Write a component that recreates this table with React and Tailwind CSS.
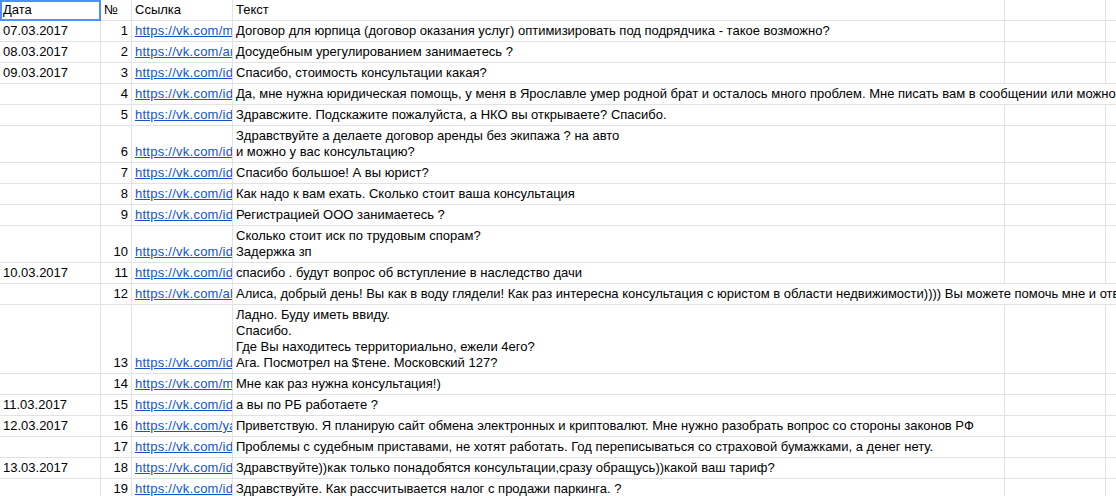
import React from 'react';

const rows = [
  { date: '07.03.2017', n: 1, link: 'https://vk.com/mirpravo', text: ['Договор для юрпица (договор оказания услуг) оптимизировать под подрядчика - такое возможно?'] },
  { date: '08.03.2017', n: 2, link: 'https://vk.com/arteman', text: ['Досудебным урегулированием занимаетесь ?'] },
  { date: '09.03.2017', n: 3, link: 'https://vk.com/id2203841', text: ['Спасибо, стоимость консультации какая?'] },
  { date: '', n: 4, link: 'https://vk.com/id1189223', text: ['Да, мне нужна юридическая помощь, у меня в Ярославле умер родной брат и осталось много проблем. Мне писать вам в сообщении или можно позвонить?'], wide: true },
  { date: '', n: 5, link: 'https://vk.com/id3320914', text: ['Здравсжите. Подскажите пожалуйста, а НКО вы открываете? Спасибо.'] },
  { date: '', n: 6, link: 'https://vk.com/id4410293', text: ['Здравствуйте а делаете договор аренды без экипажа ? на авто', 'и можно у вас консультацию?'] },
  { date: '', n: 7, link: 'https://vk.com/id5581022', text: ['Спасибо большое! А вы юрист?'] },
  { date: '', n: 8, link: 'https://vk.com/id6620117', text: ['Как надо к вам ехать. Сколько стоит ваша консультация'] },
  { date: '', n: 9, link: 'https://vk.com/id7712030', text: ['Регистрацией ООО занимаетесь ?'] },
  { date: '', n: 10, link: 'https://vk.com/id8830451', text: ['Сколько стоит иск по трудовым спорам?', 'Задержка зп'] },
  { date: '10.03.2017', n: 11, link: 'https://vk.com/id9910284', text: ['спасибо . будут вопрос об вступление в наследство дачи'] },
  { date: '', n: 12, link: 'https://vk.com/alisa_k', text: ['Алиса, добрый день! Вы как в воду глядели! Как раз интересна консультация с юристом в области недвижимости)))) Вы можете помочь мне и ответить на пару вопросов?'], wide: true },
  { date: '', n: 13, link: 'https://vk.com/id1029384', text: ['Ладно. Буду иметь ввиду.', 'Спасибо.', 'Где Вы находитесь территориально, ежели 4его?', 'Ага. Посмотрел на $тене. Московский 127?'] },
  { date: '', n: 14, link: 'https://vk.com/maxim_p', text: ['Мне как раз нужна консультация!)'] },
  { date: '11.03.2017', n: 15, link: 'https://vk.com/id2039485', text: ['а вы по РБ работаете ?'] },
  { date: '12.03.2017', n: 16, link: 'https://vk.com/yaroslav', text: ['Приветствую. Я планирую сайт обмена электронных и криптовалют. Мне нужно разобрать вопрос со стороны законов РФ'] },
  { date: '', n: 17, link: 'https://vk.com/id3048576', text: ['Проблемы с судебным приставами, не хотят работать. Год переписываться со страховой бумажками, а денег нету.'] },
  { date: '13.03.2017', n: 18, link: 'https://vk.com/id4057681', text: ['Здравствуйте))как только понадобятся консультации,сразу обращусь))какой ваш тариф?'] },
  { date: '', n: 19, link: 'https://vk.com/id5066792', text: ['Здравствуйте. Как рассчитывается налог с продажи паркинга. ?'] },
];

const cell = 'border-r border-[#e2e2e2] flex items-end pb-[2px] overflow-hidden whitespace-nowrap';

const Row = ({ r }) => (
  <div className="flex border-b border-[#e2e2e2]">
    <div className={`${cell} w-[101px] shrink-0 pl-[3px]`}>{r.date}</div>
    <div className={`${cell} w-[31px] shrink-0 justify-end pr-[3px]`}>{r.n}</div>
    <div className={`${cell} w-[101px] shrink-0 pl-[3px]`}>
      <span className="text-[#1155cc] underline tracking-[0.25px]">{r.link}</span>
    </div>
    {r.wide ? (
      <div className="flex-1 min-w-0 flex items-end pb-[2px] pl-[3px] overflow-hidden whitespace-nowrap">
        {r.text[0]}
      </div>
    ) : (
      <>
        <div className={`${cell} w-[772px] shrink-0 pl-[3px] pt-[2px]`}>
          <div className="flex flex-col">
            {r.text.map((t, i) => (
              <span key={i}>{t}</span>
            ))}
          </div>
        </div>
        <div className={`${cell} w-[101px] shrink-0`} />
        <div className="flex-1" />
      </>
    )}
  </div>
);

export default function App() {
  return (
    <div className="relative w-[1116px] h-[496px] overflow-hidden bg-white text-black text-[13px] leading-[16px] font-['Liberation_Sans',Arial,sans-serif]">
      <div className="flex border-b border-[#e2e2e2] h-[21px]">
        <div className={`${cell} w-[101px] shrink-0 pl-[3px]`}>Дата</div>
        <div className={`${cell} w-[31px] shrink-0 pl-[3px]`}>№</div>
        <div className={`${cell} w-[101px] shrink-0 pl-[3px]`}>Ссылка</div>
        <div className={`${cell} w-[772px] shrink-0 pl-[3px]`}>Текст</div>
        <div className={`${cell} w-[101px] shrink-0`} />
        <div className="flex-1" />
      </div>
      {rows.map((r) => (
        <div key={r.n} className={r.text.length === 4 ? 'h-[69px] flex flex-col [&>div]:flex-1' : r.text.length === 2 ? 'h-[37px] flex flex-col [&>div]:flex-1' : 'h-[21px] flex flex-col [&>div]:flex-1'}>
          <Row r={r} />
        </div>
      ))}
      {/* selected cell A1 */}
      <div className="absolute left-0 top-0 w-[101px] h-[21px] border-2 border-[#4d90fe]" />
    </div>
  );
}
